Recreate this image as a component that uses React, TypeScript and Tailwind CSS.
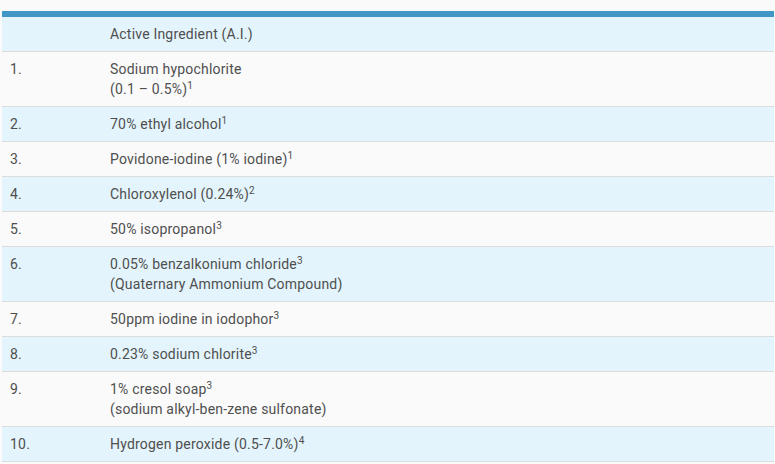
const rows: { n: string; lines: string[]; sup: string; supLine?: number }[] = [
  { n: '1.', lines: ['Sodium hypochlorite', '(0.1 – 0.5%)'], sup: '1', supLine: 1 },
  { n: '2.', lines: ['70% ethyl alcohol'], sup: '1' },
  { n: '3.', lines: ['Povidone-iodine (1% iodine)'], sup: '1' },
  { n: '4.', lines: ['Chloroxylenol (0.24%)'], sup: '2' },
  { n: '5.', lines: ['50% isopropanol'], sup: '3' },
  { n: '6.', lines: ['0.05% benzalkonium chloride', '(Quaternary Ammonium Compound)'], sup: '3', supLine: 0 },
  { n: '7.', lines: ['50ppm iodine in iodophor'], sup: '3' },
  { n: '8.', lines: ['0.23% sodium chlorite'], sup: '3' },
  { n: '9.', lines: ['1% cresol soap', '(sodium alkyl-ben-zene sulfonate)'], sup: '3', supLine: 0 },
  { n: '10.', lines: ['Hydrogen peroxide (0.5-7.0%)'], sup: '4' },
];

export default function App() {
  return (
    <div className="min-h-[464px] bg-[#fafafa] pt-[11px] pl-[2px] pr-[1px] font-['Roboto',sans-serif] text-[14px] leading-5 tracking-[0.2px] text-[#4f4f4f]">
      <div className="border-t-[6px] border-[#4096c5]">
        <table className="w-full border-collapse">
          <thead>
            <tr className="bg-[#e3f4fc] border-b border-[#dcdcdc]">
              <th className="w-[108px] pl-2 py-[7px] font-normal text-left"></th>
              <th className="py-[7px] font-normal text-left">Active Ingredient (A.I.)</th>
            </tr>
          </thead>
          <tbody>
            {rows.map((r, i) => {
              const last = r.supLine ?? r.lines.length - 1;
              return (
                <tr
                  key={r.n}
                  className={`border-b border-[#dcdcdc] ${i % 2 === 0 ? 'bg-[#fafafa]' : 'bg-[#e3f4fc]'}`}
                >
                  <td className="pl-2 py-[7px] align-top">{r.n}</td>
                  <td className="py-[7px] align-top">
                    {r.lines.map((l, j) => (
                      <div key={j}>
                        {l}
                        {j === last && <sup className="text-[10px]">{r.sup}</sup>}
                      </div>
                    ))}
                  </td>
                </tr>
              );
            })}
          </tbody>
        </table>
      </div>
    </div>
  );
}
